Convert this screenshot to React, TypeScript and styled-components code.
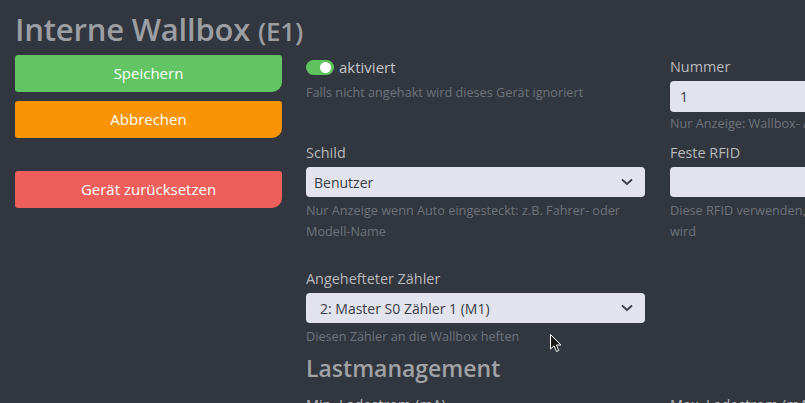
import React from "react";
import styled, { createGlobalStyle } from "styled-components";

const Global = createGlobalStyle`
  html, body { margin: 0; padding: 0; background: #32363e; overflow: hidden; }
  body { font-family: "Open Sans", "Noto Sans", sans-serif; }
  * { box-sizing: border-box; }
`;

const Page = styled.div`
  width: 805px;
  height: 403px;
  overflow: hidden;
  position: relative;
  padding: 0 0 0 15px;
`;

const Title = styled.h1`
  margin: 0;
  height: 52px;
  padding-top: 9px;
  font-size: 31px;
  line-height: 40px;
  font-weight: 600;
  color: #9c9ea2;
  white-space: nowrap;
  letter-spacing: -0.2px;
`;

const Small = styled.span`
  font-size: 26px;
`;

const Layout = styled.div`
  display: grid;
  grid-template-columns: 267px 1fr;
  column-gap: 24px;
  margin-top: 3px;
`;

const Sidebar = styled.div`
  display: flex;
  flex-direction: column;
`;

const Btn = styled.button<{ $bg: string; $mt: number }>`
  display: block;
  width: 267px;
  height: 37px;
  margin-top: ${(p) => p.$mt}px;
  border: none;
  border-radius: 3px 3px 10px 3px;
  background: ${(p) => p.$bg};
  color: #fff;
  font-family: inherit;
  font-size: 15px;
  line-height: 37px;
  padding: 0;
  text-align: center;
`;

const Main = styled.div`
  display: grid;
  grid-template-columns: 339px 339px;
  column-gap: 25px;
  align-items: start;
  margin-top: 2px;
`;

const Field = styled.div<{ $mb: number }>`
  display: flex;
  flex-direction: column;
  margin-bottom: ${(p) => p.$mb}px;
`;

const Label = styled.label`
  font-size: 14.4px;
  line-height: 20px;
  color: #b9babd;
  margin-bottom: 4px;
  white-space: nowrap;
`;

const Input = styled.div<{ $pl: number; $h: number }>`
  height: ${(p) => p.$h}px;
  width: 100%;
  border-radius: 4px;
  background: #e2e3ec;
  color: #3a3d44;
  font-size: 14px;
  display: flex;
  align-items: center;
  justify-content: space-between;
  padding: 0 12px 0 ${(p) => p.$pl}px;
`;

const Help = styled.div<{ $mt?: number }>`
  font-size: 12.7px;
  line-height: 21px;
  color: #6d737b;
  margin-top: ${(p) => p.$mt ?? 3}px;
`;

const ToggleRow = styled.div`
  display: flex;
  align-items: center;
  gap: 5px;
  height: 20px;
`;

const Switch = styled.span`
  position: relative;
  width: 28px;
  height: 15px;
  border-radius: 8px;
  background: #5ec35e;
  display: inline-block;
`;

const Knob = styled.span`
  position: absolute;
  right: 3px;
  top: 2px;
  width: 11px;
  height: 11px;
  border-radius: 50%;
  background: #fff;
`;

const ToggleText = styled.span`
  font-size: 15px;
  color: #c4c5c8;
`;

const Heading = styled.h2`
  grid-column: 1 / span 2;
  margin: 6px 0 12px;
  font-size: 23px;
  line-height: 30px;
  font-weight: 600;
  color: #a0a2a5;
`;

const Cursor = styled.svg`
  position: absolute;
  left: 550px;
  top: 334px;
`;

const Chevron = () => (
  <svg width="12" height="8" viewBox="0 0 12 8">
    <path d="M1 1.5 L6 6 L11 1.5" fill="none" stroke="#3a3d44" strokeWidth="1.8" />
  </svg>
);

export default function App() {
  return (
    <Page>
      <Global />
      <Title>
        Interne Wallbox <Small>(E1)</Small>
      </Title>
      <Layout>
        <Sidebar>
          <Btn $bg="#62c462" $mt={0}>Speichern</Btn>
          <Btn $bg="#f89406" $mt={9}>Abbrechen</Btn>
          <Btn $bg="#ee5f5b" $mt={33}>Gerät zurücksetzen</Btn>
        </Sidebar>
        <Main>
          <Field $mb={9}>
            <ToggleRow>
              <Switch>
                <Knob />
              </Switch>
              <ToggleText>aktiviert</ToggleText>
            </ToggleRow>
            <Help $mt={5}>Falls nicht angehakt wird dieses Gerät ignoriert</Help>
          </Field>
          <Field $mb={9}>
            <Label>Nummer</Label>
            <Input $pl={10} $h={31}>1</Input>
            <Help $mt={1}>Nur Anzeige: Wallbox- / Ladepunkt-Nummer</Help>
          </Field>
          <Field $mb={27}>
            <Label>Schild</Label>
            <Input $pl={8} $h={30}>
              Benutzer
              <Chevron />
            </Input>
            <Help>Nur Anzeige wenn Auto eingesteckt: z.B. Fahrer- oder Modell-Name</Help>
          </Field>
          <Field $mb={27}>
            <Label>Feste RFID</Label>
            <Input $pl={10} $h={30} />
            <Help>Diese RFID verwenden, wenn keine RFID-Karte gelesen wird</Help>
          </Field>
          <Field $mb={0}>
            <Label>Angehefteter Zähler</Label>
            <Input $pl={14} $h={30}>
              2: Master S0 Zähler 1 (M1)
              <Chevron />
            </Input>
            <Help>Diesen Zähler an die Wallbox heften</Help>
          </Field>
          <div />
          <Heading>Lastmanagement</Heading>
          <Field $mb={0}>
            <Label>Min. Ladestrom (mA)</Label>
          </Field>
          <Field $mb={0}>
            <Label>Max. Ladestrom (mA)</Label>
          </Field>
        </Main>
      </Layout>
      <Cursor width="12" height="19" viewBox="0 0 12 19">
        <path
          d="M0.5 0.5 L0.5 15 L4 11.8 L6.5 17.5 L8.8 16.5 L6.4 11 L11 11 Z"
          fill="#1a1a1a"
          stroke="#ffffff"
          strokeWidth="1"
        />
      </Cursor>
    </Page>
  );
}
